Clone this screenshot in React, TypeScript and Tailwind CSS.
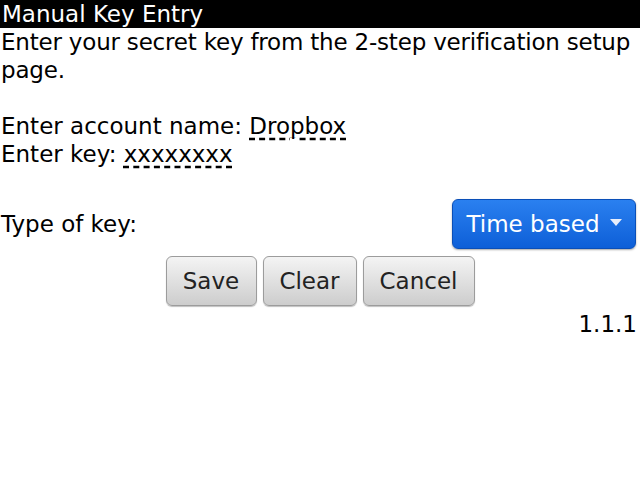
import { useState } from 'react'

const font = { fontFamily: '"DejaVu Sans", Verdana, sans-serif' }

function GrayButton({ label, width }: { label: string; width: string }) {
  return (
    <button
      className={`${width} h-[50px] rounded-[6px] border border-[#9c9c9c] bg-gradient-to-b from-[#f4f4f4] to-[#cdcdcd] text-[23px] text-[#222] shadow-[0_1px_1px_rgba(0,0,0,0.25)]`}
    >
      {label}
    </button>
  )
}

export default function App() {
  const [keyType] = useState('Time based')

  return (
    <div className="w-[640px] h-[480px] bg-white text-black text-[23px] leading-[28px]" style={font}>
      {/* Title bar */}
      <div className="h-[28px] bg-black text-white px-[2px]">Manual Key Entry</div>

      <div className="px-[1px]">
        <p className="tracking-[-0.2px]">Enter your secret key from the 2-step verification setup page.</p>
        <div className="h-[28px]" />
        <p>
          Enter account name:{' '}
          <span className="underline decoration-dashed underline-offset-[4px]">Dropbox</span>
        </p>
        <p>
          Enter key:{' '}
          <span className="underline decoration-dashed underline-offset-[4px]">xxxxxxxx</span>
        </p>
      </div>

      {/* Key type selector */}
      <div className="mt-[31px] flex items-center justify-between pl-[1px] pr-[4px]">
        <span>Type of key:</span>
        <button className="w-[184px] h-[50px] rounded-[6px] border border-[#0a4fb8] bg-gradient-to-b from-[#2a80f0] to-[#0d5fd8] text-white text-[23px] flex items-center justify-center gap-[10px] shadow-[0_1px_2px_rgba(0,0,0,0.35)]">
          <span>{keyType}</span>
          <svg width="12" height="7" viewBox="0 0 12 7" className="mb-[4px]">
            <path d="M0 0 H12 L6 7 Z" fill="#e8eefb" />
          </svg>
        </button>
      </div>

      {/* Actions */}
      <div className="mt-[7px] flex justify-center gap-[6px]">
        <GrayButton label="Save" width="w-[91px]" />
        <GrayButton label="Clear" width="w-[94px]" />
        <GrayButton label="Cancel" width="w-[112px]" />
      </div>

      <div className="mt-[4px] text-right pr-[3px]">1.1.1</div>
    </div>
  )
}
